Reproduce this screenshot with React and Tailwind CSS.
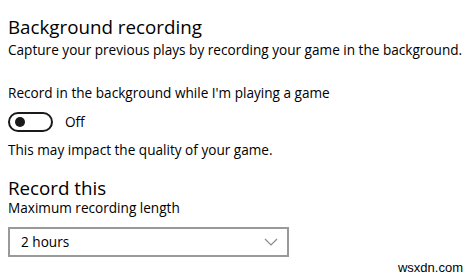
import React from 'react';

function Toggle() {
  return (
    <div className="flex items-center">
      <div className="w-[45px] h-[20px] rounded-full border-2 border-[#1a1a1a] flex items-center pl-[5px]">
        <div className="w-[10px] h-[10px] rounded-full bg-[#1a1a1a]" />
      </div>
      <span className="ml-[12px] text-[13.6px] leading-[20px]">Off</span>
    </div>
  );
}

export default function App() {
  return (
    <div className="relative w-[475px] h-[279px] bg-white text-black overflow-hidden" style={{ fontFamily: '"Open Sans", "Noto Sans", sans-serif' }}>
      <div className="flex flex-col pl-[8px] pt-[16px]">
        <h1 className="text-[18.75px] leading-[21px] font-normal">Background recording</h1>
        <p className="text-[13.6px] leading-[20px] mt-[3px]">Capture your previous plays by recording your game in the background.</p>
        <p className="text-[13.6px] leading-[20px] mt-[23px]">Record in the background while I'm playing a game</p>
        <div className="mt-[9px]">
          <Toggle />
        </div>
        <p className="text-[13.6px] leading-[20px] mt-[8px]">This may impact the quality of your game.</p>
        <h2 className="text-[18.75px] leading-[21px] font-normal mt-[17px]">Record this</h2>
        <p className="text-[13.6px] leading-[20px]">Maximum recording length</p>
        <div className="mt-[9px] w-[281px] h-[30px] border-2 border-[#999999] flex items-center justify-between pl-[11px] pr-[9px]">
          <span className="text-[13.6px] leading-[20px]">2 hours</span>
          <svg width="14" height="8" viewBox="0 0 14 8" fill="none">
            <path d="M1 1 L7 7 L13 1" stroke="#8a8a8a" strokeWidth="1.2" />
          </svg>
        </div>
      </div>
      <span className="absolute right-[12px] bottom-[4px] text-[13px] leading-[14px] text-black" style={{ fontFamily: '"Liberation Sans", sans-serif' }}>wsxdn.com</span>
    </div>
  );
}
